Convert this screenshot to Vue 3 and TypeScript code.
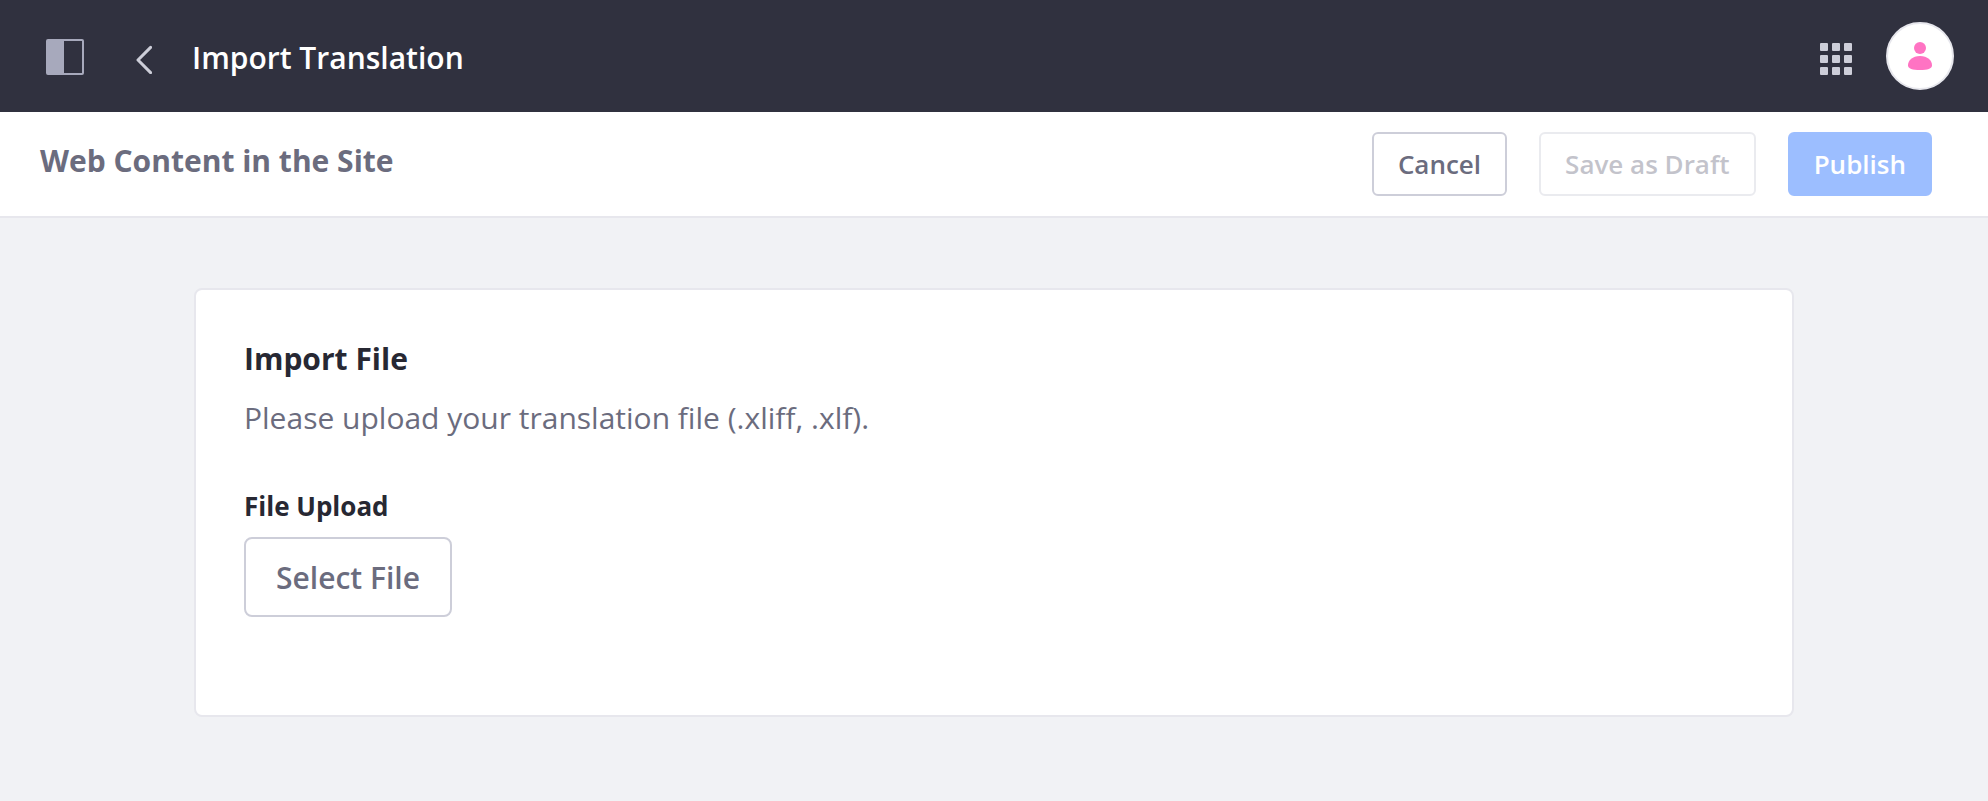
<script setup lang="ts">
interface ToolbarAction {
  label: string
  variant: 'secondary' | 'primary'
  disabled: boolean
}

const actions: ToolbarAction[] = [
  { label: 'Cancel', variant: 'secondary', disabled: false },
  { label: 'Save as Draft', variant: 'secondary', disabled: true },
  { label: 'Publish', variant: 'primary', disabled: true },
]

const gridOffsets: number[] = [0, 12, 24]
</script>

<template>
  <div class="page">
    <header class="control-menu">
      <button class="icon-button" type="button" aria-label="Toggle product menu">
        <svg width="38" height="38" viewBox="0 0 38 38">
          <rect x="1" y="3" width="36" height="34" rx="1" fill="none" stroke="#a7a9bc" stroke-width="2" />
          <rect x="1" y="3" width="17" height="34" fill="#a7a9bc" />
        </svg>
      </button>
      <a class="back-link" href="#" aria-label="Go back">
        <svg width="18" height="36" viewBox="0 0 18 36">
          <path d="M16.600 9.400 4 22l12.600 12.600" fill="none" stroke="#cdced9" stroke-width="3" stroke-linecap="round" stroke-linejoin="round" />
        </svg>
      </a>
      <h1 class="title">Import Translation</h1>
      <button class="icon-button apps" type="button" aria-label="Applications">
        <svg width="32" height="38" viewBox="0 0 32 38" fill="#cdced9">
          <template v-for="y in gridOffsets" :key="y">
            <rect v-for="x in gridOffsets" :key="x" :x="x" :y="y + 6" width="8" height="8" rx="1" />
          </template>
        </svg>
      </button>
      <button class="avatar" type="button" aria-label="User profile">
        <svg width="24" height="30" viewBox="0 0 24 30" fill="#ff73c3">
          <circle cx="12" cy="7" r="6" />
          <path d="M12 15C4.500 15 0 19.500 0 24.200 0 27.500 4.500 29 12 29s12-1.500 12-4.800C24 19.500 19.500 15 12 15z" />
        </svg>
      </button>
    </header>

    <div class="toolbar">
      <h2 class="toolbar-title">Web Content in the Site</h2>
      <div class="actions">
        <button
          v-for="action in actions"
          :key="action.label"
          type="button"
          class="btn"
          :class="action.variant"
          :disabled="action.disabled"
        >{{ action.label }}</button>
      </div>
    </div>

    <main class="content">
      <section class="sheet">
        <h3 class="sheet-title">Import File</h3>
        <p class="sheet-text">Please upload your translation file (.xliff, .xlf).</p>
        <label class="field-label" for="select-file">File Upload</label>
        <button id="select-file" class="btn secondary large" type="button" aria-label="Select File">Select File</button>
      </section>
    </main>
  </div>
</template>

<style>
body {
  margin: 0;
  background: #f1f2f5;
}
</style>

<style scoped>
.page {
  min-height: 100vh;
  background: #f1f2f5;
  color: #272833;
  font-family: "Open Sans", "Noto Sans", sans-serif;
}

h1,
h2,
h3,
p {
  margin: 0;
}

svg {
  display: block;
}

.control-menu {
  display: flex;
  align-items: center;
  height: 112px;
  padding: 0 34px 0 46px;
  background: #30313f;
}

.icon-button {
  padding: 0;
  border: 0;
  background: none;
  cursor: pointer;
}

.back-link {
  margin-left: 50px;
}

.title {
  margin-left: 40px;
  padding-top: 4px;
  color: #fff;
  font-size: 30px;
  font-weight: 600;
  line-height: 40px;
}

.apps {
  margin-left: auto;
}

.avatar {
  display: flex;
  align-items: center;
  justify-content: center;
  box-sizing: border-box;
  width: 68px;
  height: 68px;
  margin-left: 34px;
  padding: 0;
  border: 2px solid #e7e7ed;
  border-radius: 50%;
  background: #fff;
  cursor: pointer;
}

.toolbar {
  display: flex;
  align-items: flex-start;
  justify-content: space-between;
  padding: 20px 56px 20px 40px;
  border-bottom: 2px solid #e7e7ed;
  background: #fff;
}

.toolbar-title {
  padding-top: 9px;
  color: #6b6c7e;
  font-size: 30px;
  font-weight: 700;
  line-height: 40px;
}

.actions {
  display: flex;
  gap: 32px;
}

.btn {
  box-sizing: border-box;
  height: 64px;
  padding: 0 24px;
  border: 2px solid #cdced9;
  border-radius: 6px;
  background: #fff;
  color: #6b6c7e;
  font-family: inherit;
  font-size: 26px;
  font-weight: 600;
  line-height: 40px;
  cursor: pointer;
}

.btn.primary {
  border-color: #0b5fff;
  background: #0b5fff;
  color: #fff;
}

.btn:disabled {
  opacity: 0.4;
  cursor: not-allowed;
}

.btn.large {
  height: 80px;
  padding: 2px 30px 0;
  border-radius: 8px;
  font-size: 30px;
}

.content {
  padding: 70px 40px;
}

.sheet {
  display: flex;
  flex-direction: column;
  align-items: flex-start;
  box-sizing: border-box;
  max-width: 1600px;
  margin: 0 auto;
  padding: 49px 48px 98px;
  border: 2px solid #e7e7ed;
  border-radius: 8px;
  background: #fff;
}

.sheet-title {
  font-size: 30px;
  font-weight: 700;
  line-height: 40px;
}

.sheet-text {
  margin-top: 19px;
  color: #6b6c7e;
  font-size: 30px;
  line-height: 40px;
}

.field-label {
  margin-top: 48px;
  margin-bottom: 11px;
  font-size: 26px;
  font-weight: 700;
  line-height: 40px;
}
</style>
